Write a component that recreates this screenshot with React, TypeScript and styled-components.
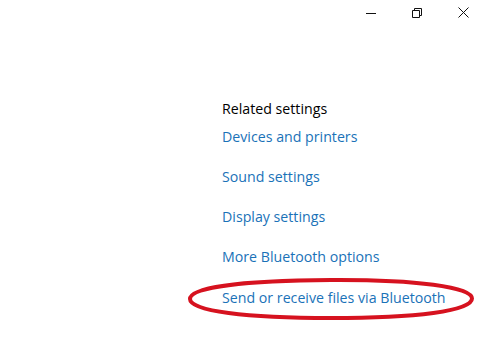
import React from 'react'
import styled, { createGlobalStyle } from 'styled-components'

const links = [
	'Devices and printers',
	'Sound settings',
	'Display settings',
	'More Bluetooth options',
]

//=> DOM
export default () => {
	return (
		<Main>
			<GlobalStyle />
			<TitleBar>
				<CaptionButton aria-label='Minimize'>
					<svg width='10' height='10' viewBox='0 0 10 10'>
						<path d='M0 5.5h10' stroke='#111' strokeWidth='1' />
					</svg>
				</CaptionButton>
				<CaptionButton aria-label='Restore'>
					<svg width='10' height='10' viewBox='0 0 10 10'>
						<path
							d='M0.5 2.5h7v7h-7z M2.5 2.5v-2h7v7h-2'
							fill='none'
							stroke='#111'
							strokeWidth='1'
						/>
					</svg>
				</CaptionButton>
				<CaptionButton aria-label='Close'>
					<svg width='11' height='11' viewBox='0 0 11 11'>
						<path d='M0.5 0.5l10 10M10.5 0.5l-10 10' stroke='#111' strokeWidth='1' />
					</svg>
				</CaptionButton>
			</TitleBar>
			<Related>
				<Heading>Related settings</Heading>
				{links.map(l => (
					<Link key={l}>{l}</Link>
				))}
				<Link $marked>
					Send or receive files via Bluetooth
					<Circle viewBox='0 0 290 44' preserveAspectRatio='none'>
						<path
							d='M145 3 C 230 2.5, 286 10, 286 21.5 C 286 34, 230 41, 145 41 C 60 41, 4 34, 4 22 C 4 10, 60 3.5, 145 3 Z'
							fill='none'
							stroke='#d6121f'
							strokeWidth='4'
						/>
					</Circle>
				</Link>
			</Related>
		</Main>
	)
}

//=> Style
const GlobalStyle = createGlobalStyle`
	html, body {
		margin: 0;
		background: #fff;
	}
	body {
		font-family: 'Open Sans', 'Noto Sans', sans-serif;
	}
`

const Main = styled.div`
	width: 481px;
	height: 338px;
	background: #fff;
	display: flex;
	flex-direction: column;
	overflow: hidden;
`

const TitleBar = styled.div`
	height: 25px;
	display: flex;
	justify-content: flex-end;
	margin-right: -5px;
`

const CaptionButton = styled.div`
	width: 46px;
	height: 25px;
	display: flex;
	align-items: center;
	justify-content: center;
	svg {
		display: block;
	}
`

const Related = styled.div`
	display: flex;
	flex-direction: column;
	align-items: flex-start;
	padding: 74px 0 0 222px;
`

const Heading = styled.div`
	font-size: 14.2px;
	line-height: 20px;
	color: #000;
	margin-bottom: 8px;
`

const Link = styled.div<{ $marked?: boolean }>`
	position: relative;
	font-size: 14.2px;
	line-height: 20px;
	color: #1a72b8;
	white-space: nowrap;
	& + & {
		margin-top: 20px;
	}
	${p => (p.$marked ? 'margin-top: 20.5px !important;' : '')}
`

const Circle = styled.svg`
	position: absolute;
	left: -36px;
	top: -11px;
	width: 290px;
	height: 44px;
	overflow: visible;
	pointer-events: none;
`
